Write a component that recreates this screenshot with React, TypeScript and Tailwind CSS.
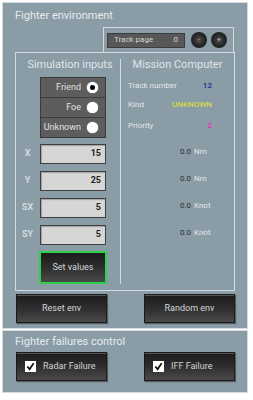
import React from "react";

const darkBtn =
  "bg-gradient-to-b from-[#1c1c1c] via-[#2e2e2e] to-[#4a4a4a] border border-[#1a1a1a] shadow-[inset_0_1px_0_#555,1px_1px_1px_rgba(0,0,0,0.4)] text-[#d0d5d8]";

function Check() {
  return (
    <span className="w-[11px] h-[11px] bg-white flex items-center justify-center">
      <svg width="9" height="9" viewBox="0 0 10 10">
        <path d="M1.5 5 L4 8 L8.5 1.5" stroke="#111" strokeWidth="2" fill="none" />
      </svg>
    </span>
  );
}

function Radio({ checked }: { checked?: boolean }) {
  return (
    <span className="w-[11px] h-[11px] rounded-full bg-white flex items-center justify-center shadow-[0_0_1px_#fff]">
      {checked && <span className="w-[5px] h-[5px] rounded-full bg-black" />}
    </span>
  );
}

function Input({ label, value }: { label: string; value: string }) {
  return (
    <div className="flex items-center h-[20px]">
      <span className="w-[25px] text-center font-bold text-[#d2dadf] text-[9px]">{label}</span>
      <div className="w-[66px] h-[20px] bg-[#d6d6d6] border border-[#3f3f3f] shadow-[inset_1px_1px_1px_rgba(0,0,0,0.25)] flex items-center justify-end pr-[4px] font-bold text-[9px] text-[#222]">
        {value}
      </div>
    </div>
  );
}

function MRow({ label, value, color }: { label: string; value: string; color: string }) {
  return (
    <div className="flex items-center justify-between h-[12px] pl-[7px] pr-[22px] text-[8px] text-[#e3e8eb]">
      <span>{label}</span>
      <span className={color}>{value}</span>
    </div>
  );
}

function URow({ unit }: { unit: string }) {
  return (
    <div className="flex items-center h-[12px] pl-[53px] text-[8px]">
      <span className="w-[17px] text-right text-[#2b3136]">0.0</span>
      <span className="ml-[3px] text-[#e3e8eb]">{unit}</span>
    </div>
  );
}

export default function App() {
  return (
    <div
      className="w-[253px] h-[400px] bg-white pl-[2px] pt-[2px]"
      style={{ fontFamily: "Roboto, 'Liberation Sans', sans-serif" }}
    >
      {/* Panel 1 */}
      <div className="w-[246px] h-[327px] bg-[#8a9ca6] border border-[#d3dbe0] flex flex-col">
        <div className="h-[22px] pl-[12px] pt-[6px] text-[11px] leading-[13px] text-[#e6ebee]">
          Fighter environment
        </div>
        <div className="ml-[100px] w-[131px] h-[25px] mt-[2px] border-t border-l border-r border-[#d3dbe0] flex items-center pl-[3px]">
          <div className="w-[78px] h-[15px] bg-[#585858] border border-[#3c3c3c] flex items-center justify-between px-[6px] text-[8px] text-[#d4d4d4]">
            <span>Track page</span>
            <span>0</span>
          </div>
          <div className="ml-[6px] w-[16px] h-[16px] rounded-full bg-[radial-gradient(circle,#555_0%,#2a2a2a_45%,#111_100%)] flex items-center justify-center text-[7px] leading-none text-[#bbb]">
            -
          </div>
          <div className="ml-[4px] w-[16px] h-[16px] rounded-full bg-[radial-gradient(circle,#555_0%,#2a2a2a_45%,#111_100%)] flex items-center justify-center text-[7px] leading-none text-[#bbb]">
            +
          </div>
        </div>
        {/* Inner panel */}
        <div className="ml-[12px] w-[220px] h-[239px] border border-[#d3dbe0] flex py-[6px]">
          {/* left col */}
          <div className="w-[105px] border-r border-[#d3dbe0] flex flex-col items-start">
            <div className="w-full text-center text-[11px] leading-[13px] text-[#dfe5e8] -mt-[1px] pl-[4px]">
              Simulation inputs
            </div>
            <div className="ml-[24px] mt-[6px] w-[66px] bg-[#3d3d3d] border border-[#3a3a3a] flex flex-col gap-[1px]">
              {[
                ["Friend", true],
                ["Foe", false],
                ["Unknown", false],
              ].map(([l, c]) => (
                <div
                  key={l as string}
                  className="h-[19px] bg-[#5d5d5d] flex items-center justify-end pr-[7px] gap-[6px] text-[9px] text-[#e0e0e0]"
                >
                  <span>{l as string}</span>
                  <Radio checked={c as boolean} />
                </div>
              ))}
            </div>
            <div className="ml-[-1px] mt-[6px] flex flex-col gap-[7px]">
              <Input label="X" value="15" />
              <Input label="Y" value="25" />
              <Input label="SX" value="5" />
              <Input label="SY" value="5" />
            </div>
            <div className="ml-[23px] mt-[6px] w-[68px] h-[33px] flex items-center justify-center text-[9px] border-2 border-[#2fd14a] bg-gradient-to-b from-[#1c1c1c] via-[#2e2e2e] to-[#4a4a4a] text-[#d0d5d8]">
              Set values
            </div>
          </div>
          {/* right col */}
          <div className="flex-1 flex flex-col">
            <div className="text-center text-[11px] leading-[13px] text-[#dfe5e8] -mt-[1px]">Mission Computer</div>
            <div className="mt-[9px] flex flex-col gap-[7px]">
              <MRow label="Track number" value="12" color="text-[#2c3d9e] font-bold" />
              <MRow label="Kind" value="UNKNOWN" color="text-[#e3e630]" />
              <div className="mt-[2px]">
                <MRow label="Priority" value="2" color="text-[#e23aae] font-bold" />
              </div>
            </div>
            <div className="mt-[14px] flex flex-col gap-[15px]">
              <URow unit="Nm" />
              <URow unit="Nm" />
              <URow unit="Knot" />
              <URow unit="Knot" />
            </div>
          </div>
        </div>
        <div className="flex justify-between ml-[13px] w-[219px] mt-[3px]">
          <div className={darkBtn + " w-[91px] h-[29px] flex items-center justify-center text-[9px]"}>Reset env</div>
          <div className={darkBtn + " w-[91px] h-[29px] flex items-center justify-center text-[9px]"}>Random env</div>
        </div>
      </div>
      {/* Panel 2 */}
      <div className="w-[246px] h-[63px] mt-[1px] bg-[#8a9ca6] border border-[#d3dbe0] flex flex-col">
        <div className="h-[20px] pl-[12px] pt-[4px] text-[11px] leading-[13px] text-[#e6ebee]">
          Fighter failures control
        </div>
        <div className="flex justify-between ml-[13px] w-[219px] mt-[1px]">
          <div className={darkBtn + " w-[91px] h-[29px] flex items-center pl-[8px] gap-[7px] text-[9px]"}>
            <Check />
            <span>Radar Failure</span>
          </div>
          <div className={darkBtn + " w-[91px] h-[29px] flex items-center pl-[8px] gap-[7px] text-[9px]"}>
            <Check />
            <span>IFF Failure</span>
          </div>
        </div>
      </div>
    </div>
  );
}
